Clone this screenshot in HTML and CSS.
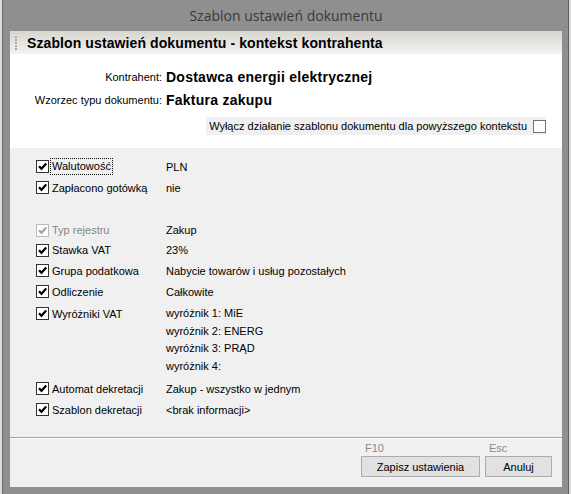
FILE: index.html
```html
<!DOCTYPE html>
<html lang="pl">
<head>
<meta charset="utf-8">
<title>Szablon ustawień dokumentu</title>
<link rel="stylesheet" href="styles.css">
</head>
<body>
<div class="window">
  <div class="titlebar">Szablon ustawień dokumentu</div>
  <div class="client">
    <div class="header"><span class="grip"></span><span class="header-title">Szablon ustawień dokumentu - kontekst kontrahenta</span></div>
    <div class="context">
      <div class="ctx-row"><span class="ctx-label">Kontrahent:</span><span class="ctx-value">Dostawca energii elektrycznej</span></div>
      <div class="ctx-row"><span class="ctx-label">Wzorzec typu dokumentu:</span><span class="ctx-value">Faktura zakupu</span></div>
      <div class="disable-row"><div class="disable-box"><span>Wyłącz działanie szablonu dokumentu dla powyższego kontekstu</span><span class="cb"></span></div></div>
    </div>
    <div class="settings">
      <div class="row"><div class="cell"><span class="cb checked"><svg viewBox="0 0 11 11"><path d="M2 5.2 L4.5 7.8 L9.2 2.6"/></svg></span><span class="lbl focus">Walutowość</span></div><div class="val">PLN</div></div>
      <div class="row"><div class="cell"><span class="cb checked"><svg viewBox="0 0 11 11"><path d="M2 5.2 L4.5 7.8 L9.2 2.6"/></svg></span><span class="lbl">Zapłacono gotówką</span></div><div class="val">nie</div></div>
      <div class="row tight group-start"><div class="cell disabled"><span class="cb checked"><svg viewBox="0 0 11 11"><path d="M2 5.2 L4.5 7.8 L9.2 2.6"/></svg></span><span class="lbl">Typ rejestru</span></div><div class="val">Zakup</div></div>
      <div class="row tight"><div class="cell"><span class="cb checked"><svg viewBox="0 0 11 11"><path d="M2 5.2 L4.5 7.8 L9.2 2.6"/></svg></span><span class="lbl">Stawka VAT</span></div><div class="val">23%</div></div>
      <div class="row"><div class="cell"><span class="cb checked"><svg viewBox="0 0 11 11"><path d="M2 5.2 L4.5 7.8 L9.2 2.6"/></svg></span><span class="lbl">Grupa podatkowa</span></div><div class="val">Nabycie towarów i usług pozostałych</div></div>
      <div class="row"><div class="cell"><span class="cb checked"><svg viewBox="0 0 11 11"><path d="M2 5.2 L4.5 7.8 L9.2 2.6"/></svg></span><span class="lbl">Odliczenie</span></div><div class="val">Całkowite</div></div>
      <div class="row multi"><div class="cell"><span class="cb checked"><svg viewBox="0 0 11 11"><path d="M2 5.2 L4.5 7.8 L9.2 2.6"/></svg></span><span class="lbl">Wyróżniki VAT</span></div>
        <div class="val lines"><div>wyróżnik 1: MiE</div><div>wyróżnik 2: ENERG</div><div>wyróżnik 3: PRĄD</div><div>wyróżnik 4:</div></div></div>
      <div class="row after-multi"><div class="cell"><span class="cb checked"><svg viewBox="0 0 11 11"><path d="M2 5.2 L4.5 7.8 L9.2 2.6"/></svg></span><span class="lbl">Automat dekretacji</span></div><div class="val">Zakup - wszystko w jednym</div></div>
      <div class="row"><div class="cell"><span class="cb checked"><svg viewBox="0 0 11 11"><path d="M2 5.2 L4.5 7.8 L9.2 2.6"/></svg></span><span class="lbl">Szablon dekretacji</span></div><div class="val">&lt;brak informacji&gt;</div></div>
    </div>
    <div class="footer">
      <div class="action save"><span class="key">F10</span><button class="btn">Zapisz ustawienia</button></div>
      <div class="action cancel"><span class="key">Esc</span><button class="btn">Anuluj</button></div>
    </div>
  </div>
</div>
</body>
</html>
```
FILE: styles.css
```css
* { box-sizing: border-box; }
html, body { margin: 0; padding: 0; }
body {
  width: 571px;
  height: 494px;
  overflow: hidden;
  background: #dcdcdc;
  font-family: "Liberation Sans", Arial, sans-serif;
  font-size: 11px;
  color: #000;
}
.window {
  margin-left: 2px;
  width: 567px;
  height: 494px;
  background: #8f8f8f;
  border-left: 1px solid #6c6c6c;
  border-right: 1px solid #5e5e5e;
  padding: 0 6px 7px 7px;
  display: flex;
  flex-direction: column;
}
.titlebar {
  height: 31px;
  flex: none;
  display: flex;
  align-items: center;
  justify-content: center;
  font-family: "Open Sans", "Noto Sans", sans-serif;
  font-size: 14px;
  color: #3a3a3a;
  padding-bottom: 1px;
}
.client {
  flex: 1;
  background: #fff;
  display: flex;
  flex-direction: column;
}
.header {
  height: 23px;
  flex: none;
  display: flex;
  align-items: center;
  padding-left: 5px;
  background: linear-gradient(to bottom, #d8d6cf, #f3f3f1);
}
.grip {
  width: 2px;
  height: 14px;
  margin-right: 10px;
  background-image: linear-gradient(to bottom, #aaaaaa 0, #aaaaaa 2px, transparent 2px);
  background-size: 2px 3px;
}
.header-title {
  font-weight: bold;
  font-size: 14px;
  letter-spacing: 0.1px;
}
.context {
  padding: 12px 0 13px;
  flex: none;
}
.ctx-row {
  height: 22px;
  display: flex;
  align-items: center;
}
.ctx-row + .ctx-row { margin-top: 1px; }
.ctx-label {
  width: 152px;
  text-align: right;
}
.ctx-value {
  margin-left: 4px;
  font-weight: bold;
  font-size: 14px;
  letter-spacing: 0.25px;
}
.disable-row {
  margin-top: 6px;
  display: flex;
  justify-content: flex-end;
  padding-right: 16px;
}
.disable-box {
  height: 18px;
  display: flex;
  align-items: center;
  background: #f0f0f0;
  padding-left: 3px;
}
.disable-box .cb { margin-left: 6px; border-color: #707070; }
.cb {
  width: 13px;
  height: 13px;
  flex: none;
  border: 1px solid #333;
  background: #fff;
  display: inline-flex;
}
.cb svg { width: 11px; height: 11px; }
.cb path { fill: none; stroke: #000; stroke-width: 2.2; }
.settings {
  flex: none;
  height: 289px;
  background: #f0f0f0;
  padding: 8px 0 0 26px;
}
.row {
  height: 21px;
  display: flex;
  align-items: center;
}
.row.tight { height: 20px; }
.row.group-start { margin-top: 22px; }
.row.multi {
  height: auto;
  align-items: flex-start;
  padding-top: 3px;
}
.row.multi .cell { height: 17.5px; }
.row.after-multi { margin-top: 3px; }
.cell {
  width: 130px;
  flex: none;
  display: flex;
  align-items: center;
}
.lbl { margin-left: 3px; }
.lbl.focus {
  margin-left: 2px;
  padding: 0 1px;
  line-height: 15px;
  outline: 1px dotted #111;
}
.cell.disabled .lbl { color: #868686; }
.cell.disabled .cb { border-color: #bcbcbc; }
.cell.disabled .cb path { stroke: #a3a3a3; }
.val.lines { line-height: 17.5px; }
.footer {
  flex: 1;
  background: #f0f0f0;
  border-top: 1px solid #a0a0a0;
  box-shadow: inset 0 1px 0 #fff;
  display: flex;
  justify-content: flex-end;
  gap: 5px;
  padding: 3px 10px 0 0;
}
.action {
  display: flex;
  flex-direction: column;
}
.key {
  line-height: 14px;
  padding-left: 4px;
  color: #8a8a8a;
}
.btn {
  margin-top: 1px;
  height: 21px;
  border: 1px solid #adadad;
  background: #e1e1e1;
  font-family: "Liberation Sans", Arial, sans-serif;
  font-size: 11px;
  color: #000;
  padding: 0;
}
.save .btn { width: 119px; }
.cancel .btn { width: 67px; }
```
